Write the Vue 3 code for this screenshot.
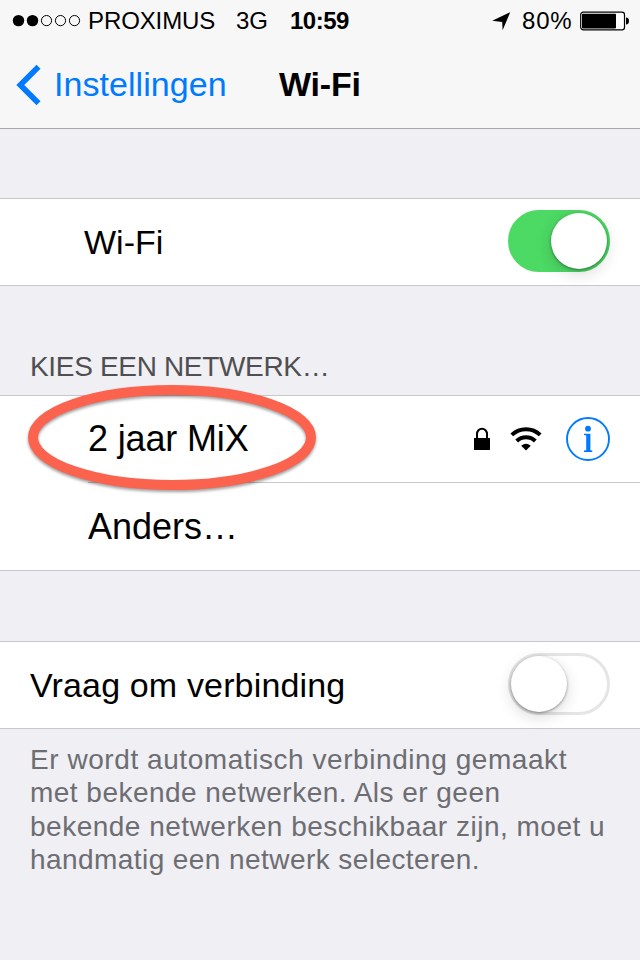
<script setup>
import { ref } from 'vue'

const wifiOn = ref(true)
const askToJoin = ref(false)
const signal = [true, true, false, false, false]
const footer = [
  'Er wordt automatisch verbinding gemaakt',
  'met bekende netwerken. Als er geen',
  'bekende netwerken beschikbaar zijn, moet u',
  'handmatig een netwerk selecteren.',
]
</script>

<template>
  <div class="screen">
    <header class="top">
      <div class="status">
        <svg class="dots" width="70" height="14" viewBox="0 0 70 14">
          <circle
            v-for="(on, i) in signal"
            :key="i"
            :cx="6.5 + i * 14"
            cy="6.6"
            :r="on ? 5.7 : 5.1"
            :fill="on ? '#000' : 'none'"
            :stroke="on ? 'none' : '#000'"
            stroke-width="1"
          />
        </svg>
        <span class="carrier">PROXIMUS</span>
        <span class="net">3G</span>
        <span class="time">10:59</span>
        <svg class="arrow" width="20" height="20" viewBox="0 0 20 20">
          <path d="M18.2 1.2 L10.6 19.2 L10.2 11 L0.2 9.8 Z" fill="#000" />
        </svg>
        <span class="percent">80%</span>
        <svg class="battery" width="50" height="20" viewBox="0 0 50 20">
          <rect x="0.7" y="1.2" width="43.8" height="17.6" rx="2.6" fill="#fff" stroke="#000" stroke-width="1.2" />
          <rect x="2" y="2.8" width="34" height="14.6" rx="0.8" fill="#000" />
          <path d="M46 6.6 Q49 7 49 10 Q49 13.2 46 13.6 Z" fill="#000" />
        </svg>
      </div>
      <nav class="nav">
        <svg class="chevron" width="26" height="42" viewBox="0 0 26 42">
          <path d="M23.5 2.8 L5.3 21 L23.5 39.2" fill="none" stroke="#007aff" stroke-width="5.6" />
        </svg>
        <span class="back">Instellingen</span>
        <h1 class="title">Wi-Fi</h1>
      </nav>
    </header>

    <section class="group wifi">
      <div class="row">
        <span class="label wifi-label">Wi-Fi</span>
        <button class="switch" :class="{ on: wifiOn }" @click="wifiOn = !wifiOn"><i class="knob"></i></button>
      </div>
    </section>

    <h2 class="heading">KIES EEN NETWERK…</h2>
    <section class="group networks">
      <div class="row network">
        <span class="label ssid">2 jaar MiX</span>
        <svg class="lock" width="16" height="24" viewBox="0 0 16 24">
          <path d="M3 12 V7 A5 5.3 0 0 1 13 7 V12" fill="none" stroke="#000" stroke-width="2" />
          <rect x="0" y="11" width="16" height="12" fill="#000" />
        </svg>
        <svg class="waves" width="32" height="24" viewBox="0 0 32 24">
          <path d="M1.8 7.9 A20.5 20.5 0 0 1 30.2 7.9" fill="none" stroke="#000" stroke-width="4" />
          <path d="M6.7 14 A13.3 13.3 0 0 1 25.3 14" fill="none" stroke="#000" stroke-width="4" />
          <path d="M11.2 18.8 Q16 14.8 20.8 18.8 L16 23.6 Z" fill="#000" />
        </svg>
        <svg class="info" width="44" height="44" viewBox="0 0 44 44">
          <circle cx="22" cy="22" r="21" fill="none" stroke="#007aff" stroke-width="1.9" />
          <circle cx="22" cy="11.7" r="2.9" fill="#007aff" />
          <path d="M18 16.7 H24.4 V33.2 L26.2 33.6 V35 H18 V33.6 L20.2 33.2 V18.5 L18 18.1 Z" fill="#007aff" />
        </svg>
      </div>
      <div class="row other"><span class="label">Anders…</span></div>
      <svg class="marker" width="300" height="120" viewBox="0 0 300 120">
        <ellipse cx="150" cy="57.5" rx="139" ry="47.5" fill="none" stroke="#fc634f" stroke-width="10" />
      </svg>
    </section>

    <section class="group ask">
      <div class="row">
        <span class="label">Vraag om verbinding</span>
        <button class="switch" :class="{ on: askToJoin }" @click="askToJoin = !askToJoin"><i class="knob"></i></button>
      </div>
    </section>
    <p class="footer">
      <span v-for="(line, i) in footer" :key="i" :class="'line' + i">{{ line }}</span>
    </p>
  </div>
</template>

<style>
body {
  margin: 0;
  background: #efeff4;
}
</style>

<style scoped>
.screen {
  width: 640px;
  height: 960px;
  overflow: hidden;
  background: #efeff4;
  color: #000;
  font-family: "Liberation Sans", Arial, sans-serif;
}
.top {
  box-sizing: border-box;
  height: 129px;
  background: #f7f7f7;
  border-bottom: 1px solid #a7a7aa;
}
.status {
  display: flex;
  align-items: center;
  height: 41px;
  padding-left: 12px;
  font-size: 24px;
  line-height: 41px;
  white-space: nowrap;
}
.status svg, .row svg, .chevron { flex: none; display: block; }
.carrier { width: 148px; margin-left: 6px; letter-spacing: -0.1px; }
.net { width: 54px; }
.time { width: 202px; font-weight: bold; letter-spacing: -0.5px; }
.percent { width: 58px; margin-left: 10px; letter-spacing: 0.8px; }
.nav {
  display: flex;
  align-items: center;
  height: 87px;
  padding-left: 15px;
  font-size: 34px;
  line-height: 87px;
}
.back { width: 225px; margin-left: 13px; color: #007aff; letter-spacing: 0.05px; }
.title { margin: 0; font-size: 34px; letter-spacing: -0.2px; }
.group {
  position: relative;
  background: #fff;
  border-top: 1px solid #c8c7cc;
  border-bottom: 1px solid #c8c7cc;
}
.wifi { margin-top: 69px; }
.row {
  display: flex;
  align-items: center;
  height: 86px;
  padding: 0 30px;
}
.label { flex: 1; font-size: 34px; line-height: 86px; }
.wifi-label { padding-left: 54px; }
.switch {
  box-sizing: border-box;
  width: 102px;
  height: 62px;
  padding: 0;
  border: 3px solid #e5e5e5;
  border-radius: 31px;
  background: #fff;
  display: flex;
  overflow: visible;
  margin-bottom: 2px;
}
.switch.on { background: #4cd964; border-color: #4cd964; justify-content: flex-end; }
.knob {
  width: 56px;
  height: 56px;
  border-radius: 50%;
  background: #fff;
  box-shadow: 0 1px 3px rgba(0, 0, 0, 0.4), 0 5px 16px rgba(0, 0, 0, 0.15);
}
.heading {
  margin: 0;
  height: 109px;
  padding: 61px 30px 0;
  box-sizing: border-box;
  font-size: 28px;
  font-weight: normal;
  line-height: 40px;
  letter-spacing: -0.33px;
  color: #4f4f52;
}
.networks .row { padding-left: 0; margin-left: 88px; }
.networks .label { font-size: 36px; }
.ssid { letter-spacing: -0.15px; }
.network { border-bottom: 1px solid #c8c7cc; }
.networks .other { height: 87px; }
.waves { margin-left: 20px; }
.info { margin-left: 24px; }
.marker {
  position: absolute;
  left: 22px;
  top: -16px;
  filter: drop-shadow(0 2px 1.5px rgba(0, 0, 0, 0.38));
}
.ask { margin-top: 70px; }
.ask .label { letter-spacing: 0.15px; }
.footer {
  display: flex;
  flex-direction: column;
  margin: 0;
  padding: 14px 0 0 30px;
  font-size: 28px;
  line-height: 33.3px;
  letter-spacing: 0.5px;
  color: #6d6d72;
  white-space: nowrap;
}
.line0 { letter-spacing: 0.56px; }
.line1 { letter-spacing: 0.47px; }
.line3 { letter-spacing: 0.43px; }
</style>
